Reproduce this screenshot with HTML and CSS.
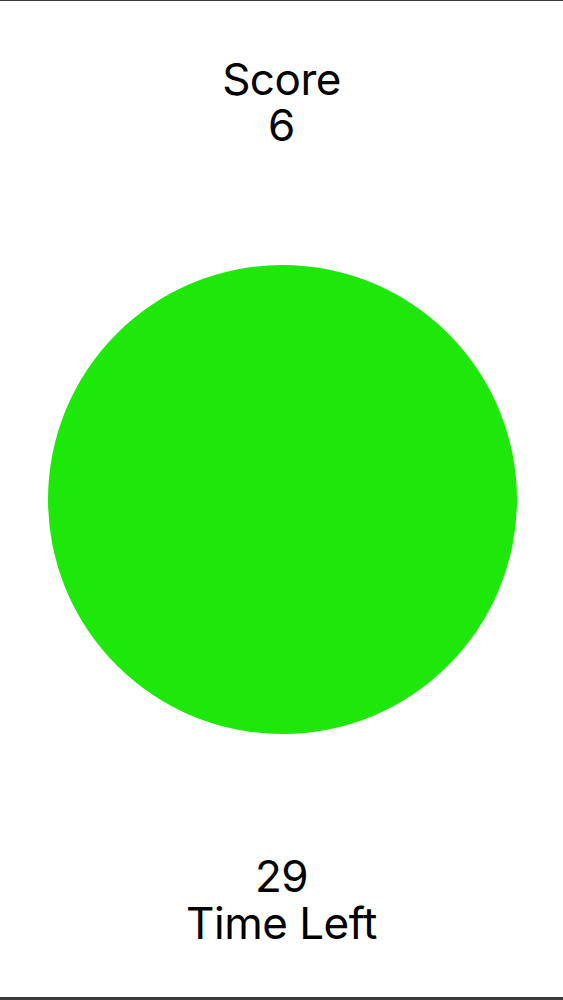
FILE: index.html
```html
<!DOCTYPE html>
<html>
<head>
<meta charset="utf-8">
<link rel="stylesheet" href="styles.css">
</head>
<body>
<div class="screen">
  <div class="label top">
    <div class="line">Score</div>
    <div class="line">6</div>
  </div>
  <div class="target"></div>
  <div class="label bottom">
    <div class="line">29</div>
    <div class="line">Time Left</div>
  </div>
</div>
</body>
</html>
```
FILE: styles.css
```css
html, body {
  margin: 0;
  padding: 0;
  background: #ffffff;
}
.screen {
  box-sizing: border-box;
  width: 563px;
  height: 1000px;
  border-top: 1px solid #3a3a3a;
  border-bottom: 3px solid #3a3a3a;
  display: flex;
  flex-direction: column;
  align-items: center;
  font-family: Inter, "Liberation Sans", sans-serif;
  color: #000;
}
.label {
  font-size: 44px;
  line-height: 46px;
  text-align: center;
  letter-spacing: -0.5px;
}
.top {
  margin-top: 55px;
}
.target {
  width: 469px;
  height: 469px;
  border-radius: 50%;
  background: #1de80a;
  margin-top: 117px;
  margin-left: 1px;
}
.bottom {
  margin-top: 119px;
  line-height: 47px;
}
```
